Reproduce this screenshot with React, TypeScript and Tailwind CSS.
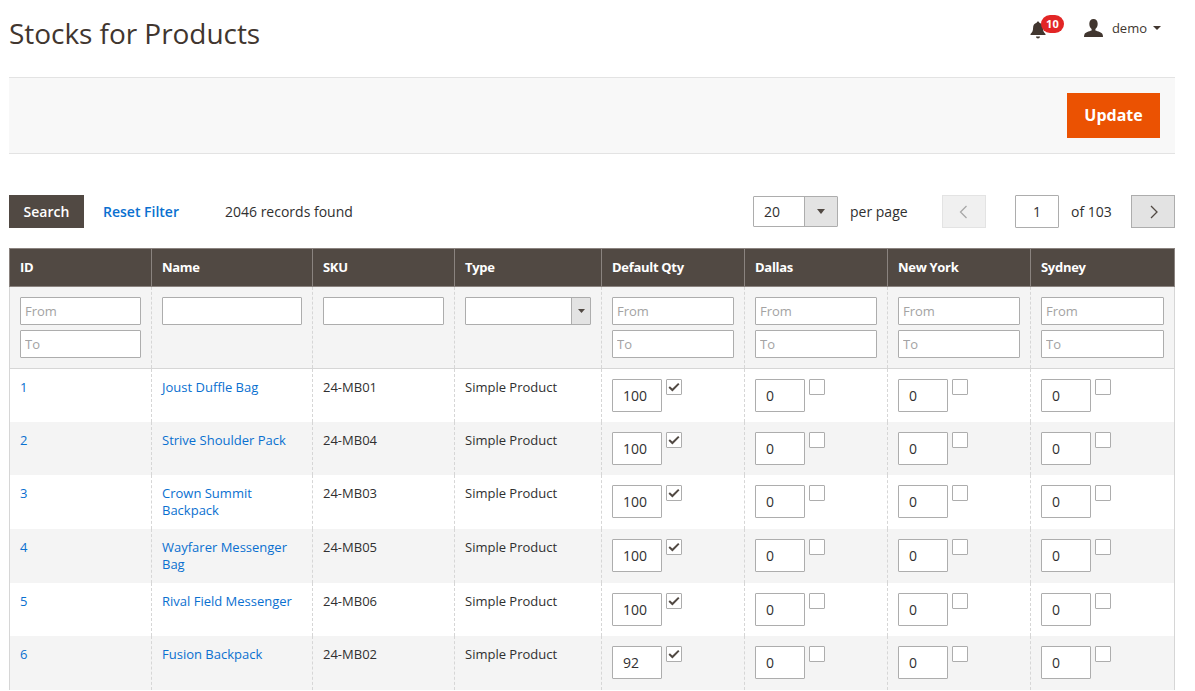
import React from "react";

type Row = { id: number; name: string; sku: string; qty: number; h: string };
const rows: Row[] = [
  { id: 1, name: "Joust Duffle Bag", sku: "24-MB01", qty: 100, h: "h-[53px]" },
  { id: 2, name: "Strive Shoulder Pack", sku: "24-MB04", qty: 100, h: "h-[53px]" },
  { id: 3, name: "Crown Summit Backpack", sku: "24-MB03", qty: 100, h: "h-[54px]" },
  { id: 4, name: "Wayfarer Messenger Bag", sku: "24-MB05", qty: 100, h: "h-[54px]" },
  { id: 5, name: "Rival Field Messenger", sku: "24-MB06", qty: 100, h: "h-[53px]" },
  { id: 6, name: "Fusion Backpack", sku: "24-MB02", qty: 92, h: "h-[54px]" },
];
const headers = ["ID", "Name", "SKU", "Type", "Default Qty", "Dallas", "New York", "Sydney"];
const cellBorder = "border-l border-dashed border-l-[#d6d6d6] first:border-l-0";

function FilterInput({ placeholder }: { placeholder?: string }) {
  return (
    <input
      readOnly
      placeholder={placeholder}
      className="block w-full h-[28px] bg-white border border-[#adadad] rounded-[1px] px-[4px] text-[13px] placeholder:text-[#a3a3a3] outline-none"
    />
  );
}

function RangeFilter() {
  return (
    <div className="flex flex-col gap-[5px]">
      <FilterInput placeholder="From" />
      <FilterInput placeholder="To" />
    </div>
  );
}

function Qty({ value, checked }: { value: number; checked: boolean }) {
  return (
    <div className="flex items-start gap-[4px]">
      <input
        readOnly
        value={value}
        className="block w-[50px] h-[33px] bg-white border border-[#adadad] rounded-[1px] pl-[10px] text-[14px] text-[#303030] outline-none"
      />
      <span className="flex items-center justify-center w-[16px] h-[16px] bg-white border border-[#adadad] rounded-[1px]">
        {checked && (
          <svg width="12" height="10" viewBox="0 0 12 10">
            <path d="M1.200 5 L4.400 8 L10.800 1.600" fill="none" stroke="#514943" strokeWidth="2" />
          </svg>
        )}
      </span>
    </div>
  );
}

export default function App() {
  return (
    <div
      className="h-[691px] overflow-hidden bg-white pl-[9px] pr-[20px] text-[#303030]"
      style={{ fontFamily: '"Open Sans", sans-serif' }}
    >
      <header className="flex items-start h-[77px]">
        <h1 className="mt-[14px] text-[28px] leading-[38px] font-normal tracking-[-0.05px] text-[#41362f]">
          Stocks for Products
        </h1>
        <div className="ml-auto relative flex items-center h-[20px] mt-[18px]">
          <div className="relative w-[16px] h-[18px] mr-[38px] mt-[4px]">
            <svg width="16" height="18" viewBox="0 0 16 18" fill="#41362f">
              <path d="M8 0.500c.8 0 1.300.6 1.300 1.300 2.400.6 3.600 2.600 3.600 5 0 3 .9 4.600 2.600 6.200v1H.5v-1C2.200 11.400 3.100 9.800 3.100 6.800c0-2.400 1.200-4.400 3.600-5C6.700 1.100 7.200.5 8 .5z" />
              <path d="M6 15.500h4c0 1.200-.9 2-2 2s-2-.8-2-2z" />
            </svg>
            <span className="absolute left-[11px] top-[-6px] w-[23px] h-[18px] rounded-full bg-[#e22626] text-white text-[11px] leading-[18px] font-bold text-center">
              10
            </span>
          </div>
          <svg width="19" height="18" viewBox="0 0 19 18" fill="#41362f" className="mr-[9px]">
            <path d="M9.500 0C12 0 13.700 1.800 13.700 4.800c0 2.300-1 4.300-2.300 5.300v1.500c2.600.9 6.400 2 7.100 3.600.3.700.5 1.700.5 2.800H0c0-1.100.2-2.100.5-2.800.7-1.600 4.500-2.700 7.100-3.600v-1.500C6.300 9.100 5.300 7.100 5.300 4.800 5.300 1.800 7 0 9.500 0z" />
          </svg>
          <span className="text-[13px] leading-[20px] text-[#41362f]">demo</span>
          <svg width="8" height="4" viewBox="0 0 8 4" fill="#41362f" className="ml-[6px] mr-[14px]">
            <path d="M0 0h8L4 4z" />
          </svg>
        </div>
      </header>

      <div className="flex items-center justify-end h-[77px] bg-[#f8f8f8] border-y border-[#e3e3e3] pr-[15px]">
        <button className="w-[93px] h-[45px] pb-[2px] bg-[#eb5202] text-white text-[16px] font-bold">Update</button>
      </div>

      <div className="flex items-center h-[33px] mt-[41px] text-[14px]">
        <button className="w-[75px] h-[33px] bg-[#514943] text-white font-semibold">Search</button>
        <a className="ml-[19px] text-[#0a70d0] font-semibold">Reset Filter</a>
        <span className="ml-[46px]">2046 records found</span>
        <div className="ml-auto flex items-center">
          <div className="flex w-[85px] h-[31px] border border-[#adadad] rounded-[1px]">
            <span className="flex-1 pl-[10px] leading-[29px] bg-white">20</span>
            <span className="flex items-center justify-center w-[33px] bg-[#e3e3e3] border-l border-[#adadad]">
              <svg width="8" height="5" viewBox="0 0 8 5" fill="#514943">
                <path d="M0 0h8L4 5z" />
              </svg>
            </span>
          </div>
          <span className="ml-[12px] w-[92px]">per page</span>
          <span className="flex items-center justify-center w-[44px] h-[33px] bg-[#f0f0f0] border border-[#e3e3e3]">
            <svg width="10" height="14" viewBox="0 0 10 14" fill="none" stroke="#a8a8a8" strokeWidth="1.300">
              <path d="M7.500 1 L1.500 7 L7.500 13" />
            </svg>
          </span>
          <span className="ml-[29px] flex items-center justify-center w-[44px] h-[33px] bg-white border border-[#adadad] rounded-[1px]">
            1
          </span>
          <span className="ml-[12px] w-[60px]">of 103</span>
          <span className="flex items-center justify-center w-[44px] h-[33px] bg-[#e3e3e3] border border-[#adadad]">
            <svg width="10" height="14" viewBox="0 0 10 14" fill="none" stroke="#514943" strokeWidth="1.300">
              <path d="M3 1 L9 7 L3 13" />
            </svg>
          </span>
        </div>
      </div>

      <table className="mt-[20px] w-[1165px] table-fixed border-collapse text-[13px] border-x border-[#d6d6d6]">
        <colgroup>
          <col className="w-[142px]" />
          <col className="w-[161px]" />
          <col className="w-[142px]" />
          <col className="w-[147px]" />
          <col className="w-[143px]" />
          <col className="w-[143px]" />
          <col className="w-[143px]" />
          <col className="w-[144px]" />
        </colgroup>
        <thead>
          <tr className="h-[38px] bg-[#514943]">
            {headers.map((h) => (
              <th
                key={h}
                className="border border-[#8a837f] pl-[10px] text-left text-white font-bold text-[13px] tracking-[-0.3px]"
              >
                {h}
              </th>
            ))}
          </tr>
          <tr className="h-[82px] bg-[#f4f4f4] border-b border-[#d6d6d6]">
            {[0, 1, 2, 3, 4, 5, 6, 7].map((i) => (
              <td key={i} className={`${cellBorder} align-top pt-[10px] px-[10px]`}>
                {(i === 0 || i >= 4) && <RangeFilter />}
                {(i === 1 || i === 2) && <FilterInput />}
                {i === 3 && (
                  <div className="flex h-[28px] bg-white border border-[#adadad] rounded-[1px]">
                    <span className="flex-1" />
                    <span className="flex items-center justify-center w-[19px] bg-[#e3e3e3] border-l border-[#adadad]">
                      <svg width="7" height="4" viewBox="0 0 7 4" fill="#514943">
                        <path d="M0 0h7L3.500 4z" />
                      </svg>
                    </span>
                  </div>
                )}
              </td>
            ))}
          </tr>
        </thead>
        <tbody>
          {rows.map((r, idx) => (
            <tr key={r.id} className={`${r.h} ${idx % 2 ? "bg-[#f4f4f4]" : "bg-white"}`}>
              <td className={`${cellBorder} align-top pt-[10px] px-[10px] leading-[17px] text-[#0a70d0]`}>{r.id}</td>
              <td className={`${cellBorder} align-top pt-[10px] px-[10px] leading-[17px] text-[#0a70d0]`}>{r.name}</td>
              <td className={`${cellBorder} align-top pt-[10px] px-[10px] leading-[17px]`}>{r.sku}</td>
              <td className={`${cellBorder} align-top pt-[10px] px-[10px] leading-[17px]`}>Simple Product</td>
              <td className={`${cellBorder} align-top pt-[10px] px-[10px]`}>
                <Qty value={r.qty} checked />
              </td>
              {[0, 1, 2].map((i) => (
                <td key={i} className={`${cellBorder} align-top pt-[10px] px-[10px]`}>
                  <Qty value={0} checked={false} />
                </td>
              ))}
            </tr>
          ))}
        </tbody>
      </table>
    </div>
  );
}
